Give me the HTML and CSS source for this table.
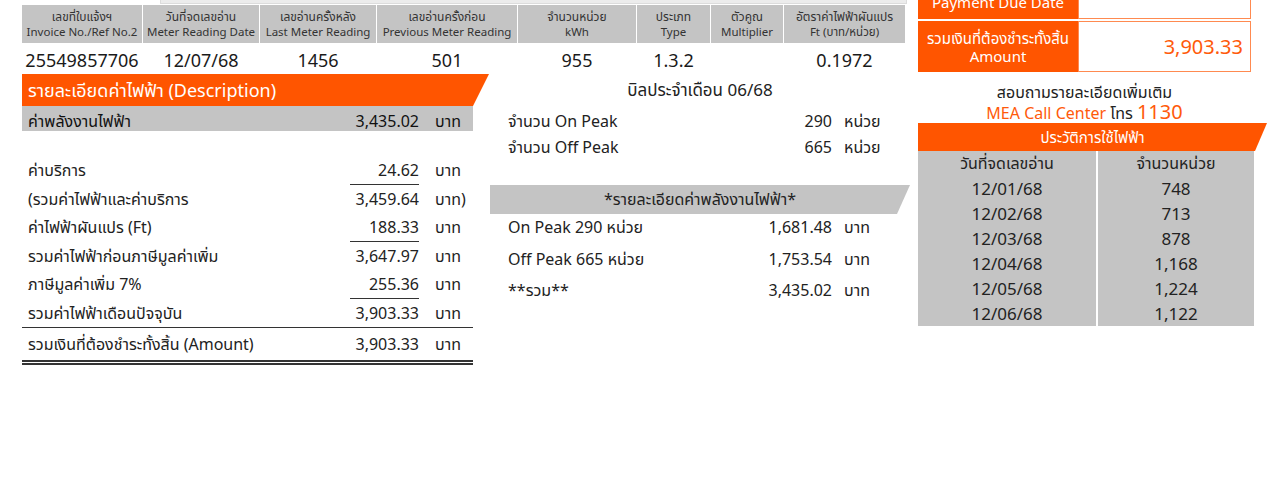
FILE: index.html
```html
<!DOCTYPE html>
<html lang="th">
<head>
<meta charset="utf-8">
<title>MEA Bill</title>
<link rel="stylesheet" href="styles.css">
</head>
<body>
<div class="page">
  <div class="main">
    <div class="strip"></div>
    <div class="meter-head">
      <div><span>เลขที่ใบแจ้งฯ</span><span>Invoice No./Ref No.2</span></div>
      <div><span>วันที่จดเลขอ่าน</span><span>Meter Reading Date</span></div>
      <div><span>เลขอ่านครั้งหลัง</span><span>Last Meter Reading</span></div>
      <div><span>เลขอ่านครั้งก่อน</span><span>Previous Meter Reading</span></div>
      <div><span>จำนวนหน่วย</span><span>kWh</span></div>
      <div><span>ประเภท</span><span>Type</span></div>
      <div><span>ตัวคูณ</span><span>Multiplier</span></div>
      <div><span>อัตราค่าไฟฟ้าผันแปร</span><span>Ft (บาท/หน่วย)</span></div>
    </div>
    <div class="meter-data">
      <div>25549857706</div>
      <div>12/07/68</div>
      <div>1456</div>
      <div>501</div>
      <div>955</div>
      <div>1.3.2</div>
      <div></div>
      <div>0.1972</div>
    </div>
    <div class="lower">
      <div class="desc">
        <div class="banner-orange">รายละเอียดค่าไฟฟ้า (Description)</div>
        <div class="row gray"><span class="lbl">ค่าพลังงานไฟฟ้า</span><span class="amt">3,435.02</span><span class="unit">บาท</span></div>
        <div class="row"><span class="lbl">ค่าบริการ</span><span class="amt ul">24.62</span><span class="unit">บาท</span></div>
        <div class="row"><span class="lbl">(รวมค่าไฟฟ้าและค่าบริการ</span><span class="amt">3,459.64</span><span class="unit">บาท)</span></div>
        <div class="row"><span class="lbl">ค่าไฟฟ้าผันแปร (Ft)</span><span class="amt ul">188.33</span><span class="unit">บาท</span></div>
        <div class="row"><span class="lbl">รวมค่าไฟฟ้าก่อนภาษีมูลค่าเพิ่ม</span><span class="amt">3,647.97</span><span class="unit">บาท</span></div>
        <div class="row"><span class="lbl">ภาษีมูลค่าเพิ่ม 7%</span><span class="amt ul">255.36</span><span class="unit">บาท</span></div>
        <div class="row line"><span class="lbl">รวมค่าไฟฟ้าเดือนปัจจุบัน</span><span class="amt">3,903.33</span><span class="unit">บาท</span></div>
        <div class="row total"><span class="lbl">รวมเงินที่ต้องชำระทั้งสิ้น (Amount)</span><span class="amt">3,903.33</span><span class="unit">บาท</span></div>
      </div>
      <div class="mid">
        <div class="mid-title">บิลประจำเดือน 06/68</div>
        <div class="units">
          <div class="mrow"><span>จำนวน On Peak</span><span class="num">290</span><span class="unit">หน่วย</span></div>
          <div class="mrow"><span>จำนวน Off Peak</span><span class="num">665</span><span class="unit">หน่วย</span></div>
        </div>
        <div class="banner-gray">*รายละเอียดค่าพลังงานไฟฟ้า*</div>
        <div class="costs">
          <div class="mrow"><span>On Peak 290 หน่วย</span><span class="num">1,681.48</span><span class="unit">บาท</span></div>
          <div class="mrow"><span>Off Peak 665 หน่วย</span><span class="num">1,753.54</span><span class="unit">บาท</span></div>
          <div class="mrow"><span>**รวม**</span><span class="num">3,435.02</span><span class="unit">บาท</span></div>
        </div>
      </div>
    </div>
  </div>
  <div class="side">
    <div class="paybox">
      <div class="pay-row due">
        <div class="pay-lbl"><span>วันครบกำหนดชำระ</span><span>Payment Due Date</span></div>
        <div class="pay-val">21/07/68</div>
      </div>
      <div class="pay-row amount">
        <div class="pay-lbl"><span>รวมเงินที่ต้องชำระทั้งสิ้น</span><span>Amount</span></div>
        <div class="pay-val">3,903.33</div>
      </div>
    </div>
    <div class="info">
      <div class="info-1">สอบถามรายละเอียดเพิ่มเติม</div>
      <div class="info-2"><span class="hl">MEA Call Center</span> โทร <span class="hl big">1130</span></div>
    </div>
    <div class="banner-hist">ประวัติการใช้ไฟฟ้า</div>
    <div class="hist">
      <div class="hcol">
        <div class="hhead">วันที่จดเลขอ่าน</div>
        <div>12/01/68</div>
        <div>12/02/68</div>
        <div>12/03/68</div>
        <div>12/04/68</div>
        <div>12/05/68</div>
        <div>12/06/68</div>
      </div>
      <div class="hcol">
        <div class="hhead">จำนวนหน่วย</div>
        <div>748</div>
        <div>713</div>
        <div>878</div>
        <div>1,168</div>
        <div>1,224</div>
        <div>1,122</div>
      </div>
    </div>
  </div>
</div>
</body>
</html>
```
FILE: styles.css
```css
* { box-sizing: border-box; margin: 0; padding: 0; }
html, body { background: #fff; }
body {
  font-family: "Noto Sans", "Noto Sans Thai", Tahoma, sans-serif;
  color: #222;
  width: 1284px;
  height: 478px;
  overflow: hidden;
}
.page { display: flex; align-items: flex-start; padding-left: 22px; }
.main { width: 888px; flex: none; }

.strip {
  margin-left: 138px;
  width: 747px;
  height: 4px;
  background: #ececec;
  border: 1px solid #dcdcdc;
  border-top: none;
  margin-bottom: 1px;
}
.meter-head, .meter-data {
  display: grid;
  grid-template-columns: 120px 116px 116px 140px 118px 73px 72px 121px;
  column-gap: 1px;
}
.meter-head div {
  background: #c4c4c4;
  height: 38px;
  display: flex;
  flex-direction: column;
  justify-content: center;
  align-items: center;
  font-size: 11.5px;
  line-height: 15px;
  color: #333;
  white-space: nowrap;
}
.meter-head div span:first-child { font-size: 12px; }
.meter-data div {
  height: 31px;
  padding-top: 3px;
  text-align: center;
  font-size: 18px;
  line-height: 28px;
  color: #1a1a1a;
}

.lower { display: flex; }
.desc { width: 468px; flex: none; }
.banner-orange {
  height: 32px;
  width: 467px;
  background: #ff5500;
  color: #fff;
  font-size: 18px;
  line-height: 32px;
  padding-left: 6px;
  clip-path: polygon(0 0, 100% 0, calc(100% - 16px) 100%, 0 100%);
}
.row {
  display: grid;
  grid-template-columns: 1fr 69px 54px;
  width: 451px;
  height: 28.5px;
  font-size: 16px;
  line-height: 28px;
  white-space: nowrap;
}
.row .lbl { padding-left: 6px; }
.row .amt { text-align: right; border-bottom: 1px solid transparent; }
.row .amt.ul { border-bottom-color: #333; }
.row .unit { padding-left: 16px; }
.row.gray {
  background: #c4c4c4;
  height: 25px;
  line-height: 25px;
  padding-top: 3px;
  margin-bottom: 25px;
  color: #111;
}
.row.gray .amt { border: none; }
.row.line { border-bottom: 1px solid #333; height: 29.5px; }
.row.total {
  height: 37px;
  line-height: 32px;
  border-bottom: 5px double #333;
}

.mid { width: 420px; flex: none; }
.mid-title {
  height: 32px;
  line-height: 32px;
  text-align: center;
  font-size: 17px;
}
.units { margin-top: 2px; }
.mrow {
  display: grid;
  grid-template-columns: 1fr 90px 66px;
  width: 408px;
  padding-left: 18px;
  font-size: 16px;
  white-space: nowrap;
}
.units .mrow { height: 26px; line-height: 26px; }
.mrow .num { text-align: right; }
.mrow .unit { padding-left: 12px; }
.banner-gray {
  margin-top: 25px;
  height: 29px;
  line-height: 29px;
  background: #c4c4c4;
  text-align: center;
  font-size: 16px;
  clip-path: polygon(0 0, 100% 0, calc(100% - 13px) 100%, 0 100%);
}
.costs { margin-top: -2px; }
.costs .mrow { height: 31.5px; line-height: 31.5px; }

.side { width: 350px; margin-left: 8px; flex: none; }
.paybox {
  width: 333px;
  margin-top: -33px;
  display: flex;
  flex-direction: column;
  gap: 2px;
}
.pay-row { display: grid; grid-template-columns: 160px 173px; }
.pay-row.due { height: 52px; }
.pay-row.amount { height: 51px; }
.pay-lbl {
  background: #ff5500;
  color: #fff;
  display: flex;
  flex-direction: column;
  justify-content: center;
  align-items: center;
  font-size: 15px;
  line-height: 18px;
  white-space: nowrap;
}
.pay-val {
  border: 1px solid #ff8a50;
  background: #fff;
  color: #ff5a0a;
  padding-right: 7px;
  font-size: 20px;
  display: flex;
  align-items: center;
  justify-content: flex-end;
}
.due .pay-val { padding-bottom: 8px; }
.info { width: 333px; text-align: center; margin-top: 10px; }
.info-1 { font-size: 16px; line-height: 21px; height: 21px; }
.info-2 { font-size: 16px; line-height: 20px; height: 20px; white-space: nowrap; }
.hl { color: #ff5a0a; }
.hl.big { font-size: 20px; line-height: 18px; }
.banner-hist {
  width: 349px;
  height: 28px;
  line-height: 28px;
  background: #ff5500;
  color: #fff;
  text-align: center;
  font-size: 15px;
  clip-path: polygon(0 0, 100% 0, calc(100% - 12px) 100%, 0 100%);
}
.hist {
  display: grid;
  grid-template-columns: 178px 156px;
  column-gap: 2px;
  width: 336px;
}
.hcol { background: #c4c4c4; }
.hcol div {
  height: 25px;
  line-height: 25px;
  text-align: center;
  font-size: 17px;
}
.hcol .hhead { font-size: 16px; }
```
